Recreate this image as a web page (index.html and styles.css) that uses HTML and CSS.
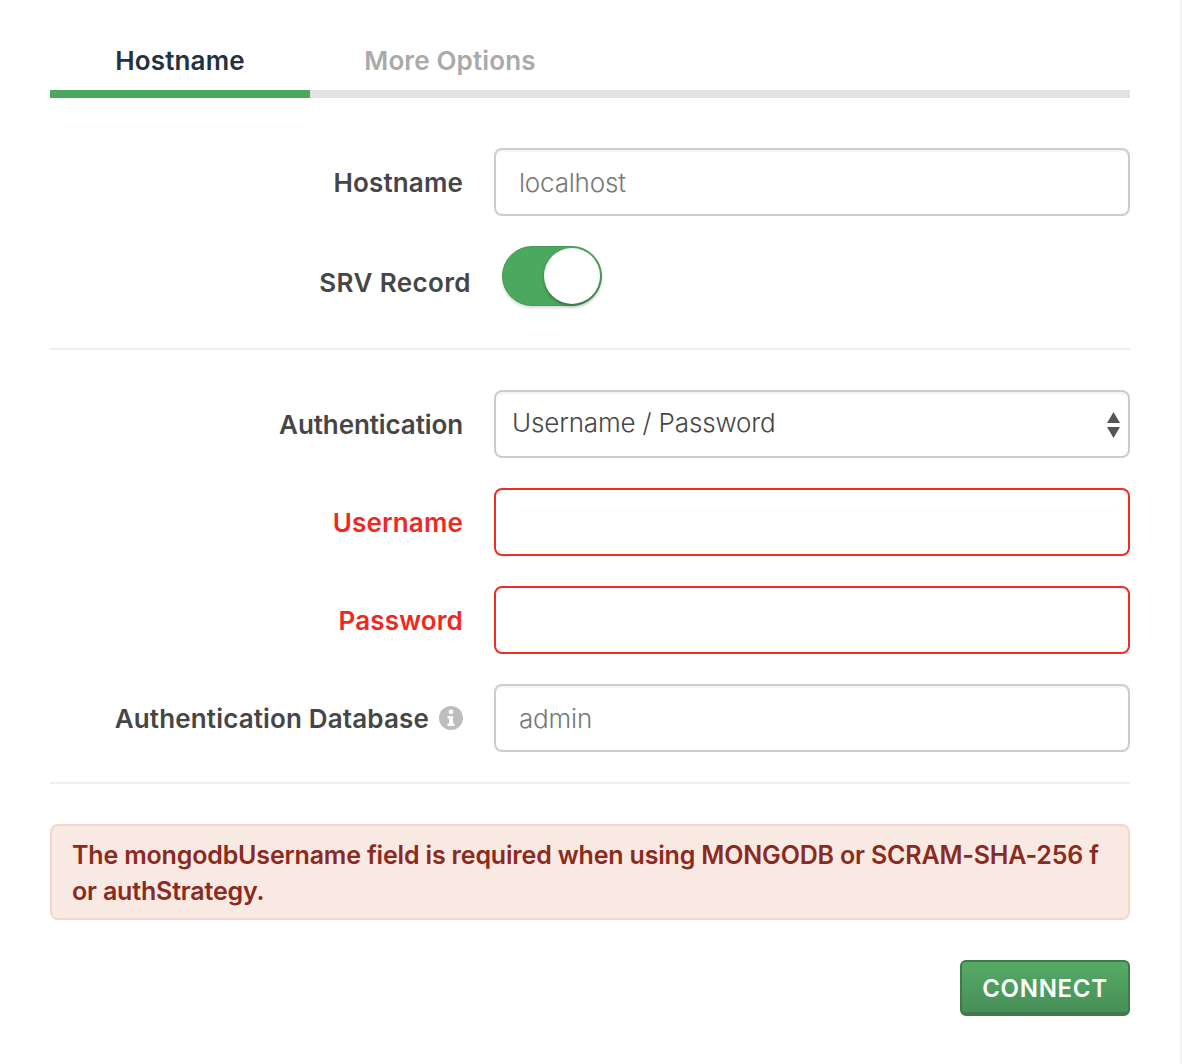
FILE: index.html
```html
<html>
    <head>
        <meta charset="utf-8" />
        <title>Connect</title>
        <link rel="stylesheet" href="styles.css">
    </head>
    <body>
        <div class="page">
            <div class="tabs">
                <div class="tab active">Hostname</div>
                <div class="tab tab-wide">More Options</div>
            </div>

            <div class="section first">
                <div class="row">
                    <label class="label">Hostname</label>
                    <input class="field" type="text" placeholder="localhost">
                </div>
                <div class="row row-srv">
                    <label class="label label-srv">SRV Record</label>
                    <div class="toggle"><div class="knob"></div></div>
                </div>
            </div>

            <div class="section">
                <div class="row">
                    <label class="label label-auth">Authentication</label>
                    <div class="select">
                        <span>Username / Password</span>
                        <svg class="arrows" width="13" height="26" viewBox="0 0 13 26">
                            <path d="M6.500 0L13 11H0z" fill="#555"/>
                            <path d="M0 15h13L6.500 26z" fill="#555"/>
                        </svg>
                    </div>
                </div>
                <div class="row">
                    <label class="label error">Username</label>
                    <input class="field field-error" type="text">
                </div>
                <div class="row">
                    <label class="label error">Password</label>
                    <input class="field field-error" type="password">
                </div>
                <div class="row">
                    <label class="label">Authentication Database
                        <svg class="info" width="24" height="24" viewBox="0 0 24 24">
                            <circle cx="12" cy="12" r="12" fill="#bdbdbd"/>
                            <circle cx="12" cy="5.800" r="2.400" fill="#fff"/>
                            <path d="M8.500 10h5.500v7.500h1.500v2.500h-7v-2.500h1.500v-5h-1.500z" fill="#fff"/>
                        </svg>
                    </label>
                    <input class="field" type="text" placeholder="admin">
                </div>
            </div>

            <div class="alert">The mongodbUsername field is required when using MONGODB or SCRAM-SHA-256 f<br>or authStrategy.</div>

            <div class="actions">
                <button class="connect">CONNECT</button>
            </div>
        </div>
    </body>
</html>
```

FILE: styles.css
```css
html, body {
    margin: 0;
    padding: 0;
    background-color: white;
}

body {
    height: 1064px;
    overflow: hidden;
    font-family: Inter, "Liberation Sans", sans-serif;
}

.page {
    box-sizing: border-box;
    width: 1182px;
    height: 1064px;
    padding: 0 50px;
    border-right: 2px solid #f2f2f2;
}

.tabs {
    display: flex;
    height: 90px;
    border-bottom: 8px solid #e2e2e2;
}

.tab {
    width: 260px;
    padding-top: 42px;
    box-sizing: border-box;
    margin-bottom: -8px;
    height: 98px;
    text-align: center;
    font-size: 26px;
    line-height: 38px;
    font-weight: 600;
    letter-spacing: 0.15px;
    color: #aaaaaa;
}

.tab-wide {
    width: 280px;
}

.tab.active {
    color: #243141;
    border-bottom: 8px solid #4ca75f;
}

.section {
    display: flex;
    flex-direction: column;
    gap: 30px;
    padding: 40px 0 30px 0;
    border-bottom: 2px solid #eeeeee;
}

.section.first {
    padding-top: 50px;
    padding-bottom: 42px;
}

.row {
    display: flex;
    align-items: center;
}

.label {
    width: 413px;
    flex: none;
    display: flex;
    justify-content: flex-end;
    align-items: center;
    gap: 10px;
    font-size: 26px;
    font-weight: 600;
    letter-spacing: 0.15px;
    color: #464646;
}

.label.error {
    color: #f0281e;
}

.label-srv {
    width: 421px;
    margin-top: 12px;
    letter-spacing: 0.4px;
}

.label-auth {
    letter-spacing: -0.1px;
}

.field {
    box-sizing: border-box;
    width: 636px;
    height: 68px;
    margin-left: 31px;
    padding: 0 23px;
    border: 2px solid #cccccc;
    border-radius: 8px;
    outline: none;
    background: white;
    box-shadow: inset 0 2px 2px rgba(0, 0, 0, 0.05);
    font-family: Inter, "Liberation Sans", sans-serif;
    font-size: 26px;
    font-weight: 300;
    letter-spacing: -0.2px;
    color: #464646;
}

.field::placeholder {
    color: #777777;
    opacity: 1;
}

.field-error {
    border-color: #ee2e22;
    box-shadow: none;
}

.select {
    box-sizing: border-box;
    width: 636px;
    height: 68px;
    margin-left: 31px;
    padding: 0 8px 0 16px;
    display: flex;
    justify-content: space-between;
    align-items: center;
    border: 2px solid #cccccc;
    border-radius: 8px;
    box-shadow: inset 0 2px 2px rgba(0, 0, 0, 0.05);
    font-size: 26px;
    font-weight: 300;
    letter-spacing: -0.15px;
    color: #464646;
}

.select span {
    margin-bottom: 4px;
}

.arrows {
    margin-top: 2px;
}

.toggle {
    box-sizing: border-box;
    width: 100px;
    height: 60px;
    margin-left: 31px;
    padding: 1px;
    display: flex;
    justify-content: flex-end;
    background-color: #4ca75f;
    border: 1px solid #449a56;
    border-radius: 30px;
    box-shadow: 0 2px 3px rgba(0, 0, 0, 0.15);
}

.knob {
    box-sizing: border-box;
    width: 56px;
    height: 56px;
    background-color: white;
    border-radius: 50%;
    box-shadow: 0 2px 3px rgba(0, 0, 0, 0.3);
}

.alert {
    box-sizing: border-box;
    height: 96px;
    margin-top: 40px;
    padding: 11px 20px;
    background-color: #f9e9e3;
    border: 2px solid #f6d6c9;
    border-radius: 8px;
    font-size: 25px;
    line-height: 36px;
    font-weight: 600;
    letter-spacing: -0.17px;
    white-space: nowrap;
    color: #8a2a20;
}

.actions {
    display: flex;
    justify-content: flex-end;
    margin-top: 40px;
}

.connect {
    box-sizing: border-box;
    width: 170px;
    height: 56px;
    padding: 3px 0 0 0;
    background: linear-gradient(#55ab64, #478f58);
    border: 2px solid #41794a;
    border-bottom-width: 4px;
    border-radius: 6px;
    font-family: Inter, "Liberation Sans", sans-serif;
    font-size: 24px;
    font-weight: 600;
    letter-spacing: 0.7px;
    color: white;
}
```
